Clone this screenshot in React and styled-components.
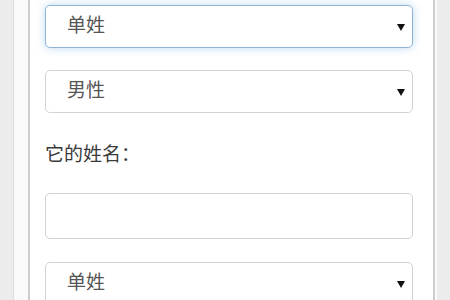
import React from 'react';
import styled, { createGlobalStyle, css } from 'styled-components';

const GlobalStyle = createGlobalStyle`
  html, body {
    margin: 0;
    padding: 0;
    background: #ececec;
    font-family: "Noto Sans CJK SC", "Noto Sans", sans-serif;
  }
`;

const Page = styled.div`
  width: 450px;
  height: 300px;
  overflow: hidden;
  padding-left: 13px;
  box-sizing: border-box;
`;

const Panel = styled.div`
  width: 424px;
  height: 100%;
  box-sizing: border-box;
  background: #fafafa;
  border-left: 1px solid #dcdcdc;
  padding: 0 2px 0 14px;
`;

const Card = styled.div`
  height: 100%;
  box-sizing: border-box;
  background: #fff;
  border-left: 2px solid #cdcdcd;
  border-right: 2px solid #cdcdcd;
  padding: 5px 20px 0 15px;
  display: flex;
  flex-direction: column;
`;

const SelectBox = styled.div`
  position: relative;
  flex: none;
  height: 43px;
  box-sizing: border-box;
  border: 1.5px solid #d3d3d3;
  border-radius: 5px;
  background: #fff;
  display: flex;
  align-items: center;
  padding: 0 0 6px 21px;
  font-size: 19px;
  color: #555;
  margin-bottom: ${p => p.$gap || 0}px;
  ${p => p.$focused && css`
    border-color: #90b3d4;
    box-shadow: 0 0 8px rgba(120, 180, 230, 0.5);
  `}
`;

const Arrow = styled.span`
  position: absolute;
  right: 7px;
  top: 50%;
  margin-top: -3px;
  width: 0;
  height: 0;
  border-left: 4.5px solid transparent;
  border-right: 4.5px solid transparent;
  border-top: 7px solid #111;
`;

const Label = styled.div`
  flex: none;
  height: 28px;
  line-height: 28px;
  margin: 26px 0 26px;
  font-size: 19px;
  color: #3a3a3a;
`;

const TextInput = styled.input`
  flex: none;
  height: 46px;
  box-sizing: border-box;
  border: 1.5px solid #d3d3d3;
  border-radius: 5px;
  background: #fff;
  margin: 0 0 23px;
  outline: none;
`;

const Select = ({ value, focused, gap }) => (
  <SelectBox $focused={focused} $gap={gap}>
    {value}
    <Arrow />
  </SelectBox>
);

const App = () => (
  <>
    <GlobalStyle />
    <Page>
      <Panel>
        <Card>
          <Select value="单姓" focused gap={22} />
          <Select value="男性" />
          <Label>它的姓名：</Label>
          <TextInput type="text" />
          <Select value="单姓" />
        </Card>
      </Panel>
    </Page>
  </>
);

export default App;
